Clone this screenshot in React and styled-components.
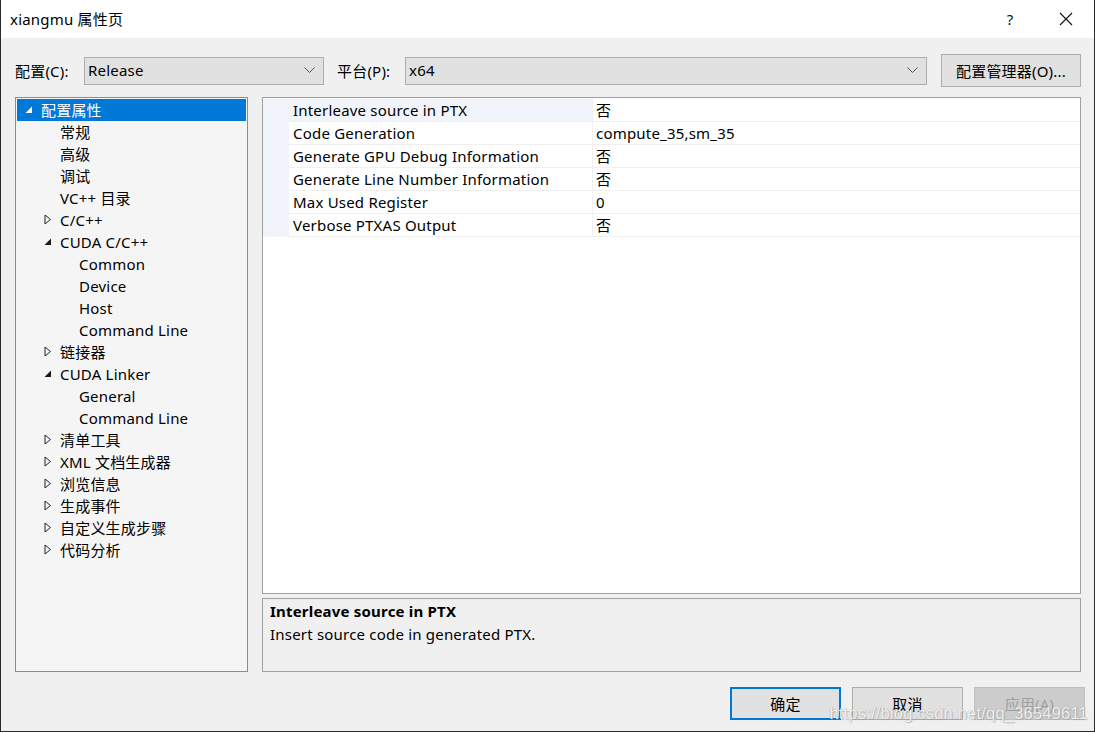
import React from "react";
import styled, { createGlobalStyle } from "styled-components";

const Global = createGlobalStyle`
  html, body { margin: 0; padding: 0; background: #f0f0f0; }
  body { font-family: "Noto Sans", "Noto Sans CJK SC", sans-serif; font-size: 15px; letter-spacing: 0.2px; color: #000; }
  * { box-sizing: border-box; }
`;

const Win = styled.div`
  position: relative;
  width: 1095px;
  height: 732px;
  background: #f0f0f0;
  border-left: 1px solid #2b2b2b;
  border-right: 1px solid #2b2b2b;
  border-bottom: 1px solid #2b2b2b;
  display: flex;
  flex-direction: column;
  overflow: hidden;
`;

const TitleBar = styled.div`
  height: 38px;
  background: #fff;
  display: flex;
  align-items: center;
  padding-left: 9px;
  flex-shrink: 0;
`;

const Title = styled.div`
  flex: 1;
  font-size: 15px;
  padding-bottom: 2px;
`;

const TitleBtn = styled.div`
  width: 56px;
  height: 38px;
  display: flex;
  align-items: center;
  justify-content: center;
  font-size: 15px;
  color: #111;
  padding-bottom: 1px;
`;

const Body = styled.div`
  flex: 1;
  display: flex;
  flex-direction: column;
  padding: 16px 9px 0 14px;
`;

const TopRow = styled.div`
  display: flex;
  align-items: center;
  height: 33px;
`;

const Label = styled.div`
  width: ${(p) => p.w}px;
  padding-bottom: 1px;
`;

const Select = styled.div`
  width: ${(p) => p.w}px;
  height: 28px;
  background: #e1e1e1;
  border: 1px solid #adadad;
  display: flex;
  align-items: center;
  padding: 0 8px 1px 3px;
  margin-right: ${(p) => p.mr}px;
  & > span { flex: 1; }
`;

const MgrButton = styled.div`
  width: 140px;
  height: 33px;
  background: #e1e1e1;
  border: 1px solid #adadad;
  display: flex;
  align-items: center;
  justify-content: center;
  padding-bottom: 1px;
`;

const Main = styled.div`
  display: flex;
  margin-top: 10px;
  height: 575px;
`;

const Tree = styled.div`
  width: 233px;
  border: 1px solid #8c8c8c;
  background: #f5f5f5;
  padding: 1px;
  margin-right: 14px;
`;

const TreeRow = styled.div`
  height: 22px;
  display: flex;
  align-items: center;
  padding-left: ${(p) => 8 + p.level * 19}px;
  padding-bottom: 1px;
  background: ${(p) => (p.selected ? "#0078d7" : "transparent")};
  color: ${(p) => (p.selected ? "#fff" : "#000")};
  white-space: nowrap;
`;

const Arrow = styled.span`
  width: 16px;
  height: 21px;
  display: inline-flex;
  align-items: center;
  flex-shrink: 0;
`;

const RightCol = styled.div`
  width: 819px;
  display: flex;
  flex-direction: column;
`;

const Grid = styled.div`
  height: 497px;
  background: #fff;
  border: 1px solid #a0a0a0;
  padding-top: 1px;
`;

const GridRow = styled.div`
  display: flex;
  height: 23px;
`;

const Gutter = styled.div`
  width: 26px;
  background: #f1f5fb;
`;

const NameCell = styled.div`
  width: 304px;
  padding-left: 4px;
  padding-bottom: 1px;
  display: flex;
  align-items: center;
  background: ${(p) => (p.active ? "#f1f5fb" : "#fff")};
  border-bottom: 1px solid #f0f0f0;
  border-right: 1px solid #f0f0f0;
`;

const ValueCell = styled.div`
  flex: 1;
  padding-left: 3px;
  padding-bottom: 1px;
  display: flex;
  align-items: center;
  border-bottom: 1px solid #f0f0f0;
`;

const Desc = styled.div`
  margin-top: 4px;
  height: 74px;
  border: 1px solid #a0a0a0;
  background: #f0f0f0;
  padding: 1px 7px;
  line-height: 23px;
`;

const DescTitle = styled.div`
  font-weight: bold;
`;

const Footer = styled.div`
  display: flex;
  justify-content: flex-end;
  gap: 11px;
  margin-top: 15px;
`;

const Button = styled.div`
  width: 111px;
  height: 33px;
  display: flex;
  align-items: center;
  justify-content: center;
  padding-bottom: 1px;
  background: ${(p) => (p.disabled ? "#cccccc" : "#e1e1e1")};
  color: ${(p) => (p.disabled ? "#a0a0a0" : "#000")};
  border: ${(p) => (p.primary ? "2px solid #0078d7" : p.disabled ? "1px solid #bfbfbf" : "1px solid #adadad")};
`;

const Watermark = styled.div`
  position: absolute;
  right: 6px;
  bottom: 8px;
  font-family: "Liberation Sans", Arial, sans-serif;
  font-size: 16.5px;
  letter-spacing: 0.2px;
  color: rgba(255, 255, 255, 0.85);
  text-shadow: 0 0 1px rgba(120, 120, 120, 0.6), 1px 1px 1px rgba(150, 150, 150, 0.5);
  pointer-events: none;
`;

const Chevron = () => (
  <svg width="11" height="7" viewBox="0 0 11 7">
    <path d="M0.5 0.5 L5.5 5.5 L10.5 0.5" fill="none" stroke="#555" strokeWidth="1" />
  </svg>
);

const Expanded = ({ color }) => (
  <svg width="8" height="8" viewBox="0 0 8 8">
    <polygon points="7,0.5 7,7 0.5,7" fill={color} />
  </svg>
);

const Collapsed = () => (
  <svg width="8" height="11" viewBox="0 0 8 11">
    <polygon points="1,1 6.5,5.5 1,10" fill="none" stroke="#222" strokeWidth="1" />
  </svg>
);

const CloseIcon = () => (
  <svg width="14" height="14" viewBox="0 0 14 14">
    <path d="M1 1 L13 13 M13 1 L1 13" stroke="#111" strokeWidth="1.1" />
  </svg>
);

const tree = [
  { t: "配置属性", l: 0, a: "open", sel: true },
  { t: "常规", l: 1 },
  { t: "高级", l: 1 },
  { t: "调试", l: 1 },
  { t: "VC++ 目录", l: 1 },
  { t: "C/C++", l: 1, a: "closed" },
  { t: "CUDA C/C++", l: 1, a: "open" },
  { t: "Common", l: 2 },
  { t: "Device", l: 2 },
  { t: "Host", l: 2 },
  { t: "Command Line", l: 2 },
  { t: "链接器", l: 1, a: "closed" },
  { t: "CUDA Linker", l: 1, a: "open" },
  { t: "General", l: 2 },
  { t: "Command Line", l: 2 },
  { t: "清单工具", l: 1, a: "closed" },
  { t: "XML 文档生成器", l: 1, a: "closed" },
  { t: "浏览信息", l: 1, a: "closed" },
  { t: "生成事件", l: 1, a: "closed" },
  { t: "自定义生成步骤", l: 1, a: "closed" },
  { t: "代码分析", l: 1, a: "closed" },
];

const props = [
  ["Interleave source in PTX", "否"],
  ["Code Generation", "compute_35,sm_35"],
  ["Generate GPU Debug Information", "否"],
  ["Generate Line Number Information", "否"],
  ["Max Used Register", "0"],
  ["Verbose PTXAS Output", "否"],
];

export default function App() {
  return (
    <Win>
      <Global />
      <TitleBar>
        <Title>xiangmu 属性页</Title>
        <TitleBtn>?</TitleBtn>
        <TitleBtn><CloseIcon /></TitleBtn>
      </TitleBar>
      <Body>
        <TopRow>
          <Label w={69}>配置(C):</Label>
          <Select w={240} mr={13}><span>Release</span><Chevron /></Select>
          <Label w={68}>平台(P):</Label>
          <Select w={522} mr={14}><span>x64</span><Chevron /></Select>
          <MgrButton>配置管理器(O)...</MgrButton>
        </TopRow>
        <Main>
          <Tree>
            {tree.map((n, i) => (
              <TreeRow key={i} level={n.l} selected={n.sel}>
                <Arrow>
                  {n.a === "open" && <Expanded color={n.sel ? "#fff" : "#1a1a1a"} />}
                  {n.a === "closed" && <Collapsed />}
                </Arrow>
                {n.t}
              </TreeRow>
            ))}
          </Tree>
          <RightCol>
            <Grid>
              {props.map(([k, v], i) => (
                <GridRow key={i}>
                  <Gutter />
                  <NameCell active={i === 0}>{k}</NameCell>
                  <ValueCell>{v}</ValueCell>
                </GridRow>
              ))}
            </Grid>
            <Desc>
              <DescTitle>Interleave source in PTX</DescTitle>
              <div>Insert source code in generated PTX.</div>
            </Desc>
          </RightCol>
        </Main>
        <Footer>
          <Button primary>确定</Button>
          <Button>取消</Button>
          <Button disabled>应用(A)</Button>
        </Footer>
      </Body>
      <Watermark>https://blog.csdn.net/qq_36549611</Watermark>
    </Win>
  );
}
